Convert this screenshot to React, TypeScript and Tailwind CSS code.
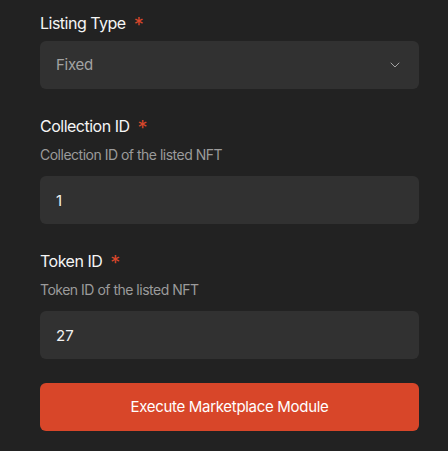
import { ChevronDown } from "lucide-react";

interface FieldProps {
  label: string;
  description?: string;
  children: React.ReactNode;
}

function Field({ label, description, children }: FieldProps) {
  return (
    <div className="flex flex-col">
      <div className="flex h-6 items-center text-[16px] tracking-[-0.5px] text-[#f5f5f5]">
        <span>{label}</span>
        <span className="ml-[8px] pt-1 text-[20px] leading-none text-[#d9472b]">*</span>
      </div>
      {description && (
        <p className="mt-[7px] text-[14px] leading-5 tracking-[-0.5px] text-[#9b9b9b]">
          {description}
        </p>
      )}
      <div className={description ? "mt-[11px]" : "mt-[6px]"}>{children}</div>
    </div>
  );
}

export default function App() {
  return (
    <div
      className="min-h-screen bg-[#222222] px-10 pt-[11px] pb-5"
      style={{ fontFamily: "Inter, 'Noto Sans', sans-serif" }}
    >
      <form className="flex w-[379px] flex-col gap-[25px]">
        <Field label="Listing Type">
          <button
            type="button"
            className="flex h-12 w-full items-center justify-between rounded-md bg-[#313131] px-4 text-[15px] tracking-[-0.3px] text-[#a3a3a3]"
          >
            <span>Fixed</span>
            <ChevronDown className="h-4 w-4 text-[#a3a3a3]" strokeWidth={1.5} />
          </button>
        </Field>
        <Field label="Collection ID" description="Collection ID of the listed NFT">
          <input
            readOnly
            value="1"
            className="h-12 w-full rounded-md bg-[#313131] px-4 text-[15px] text-[#f2f2f2] outline-none"
          />
        </Field>
        <Field label="Token ID" description="Token ID of the listed NFT">
          <input
            readOnly
            value="27"
            className="h-12 w-full rounded-md bg-[#313131] px-4 text-[15px] text-[#f2f2f2] outline-none"
          />
        </Field>
        <button
          type="button"
          className="-mt-[1px] h-12 w-full rounded-md bg-[#d84629] text-[15px] tracking-[-0.3px] text-white"
        >
          Execute Marketplace Module
        </button>
      </form>
    </div>
  );
}
